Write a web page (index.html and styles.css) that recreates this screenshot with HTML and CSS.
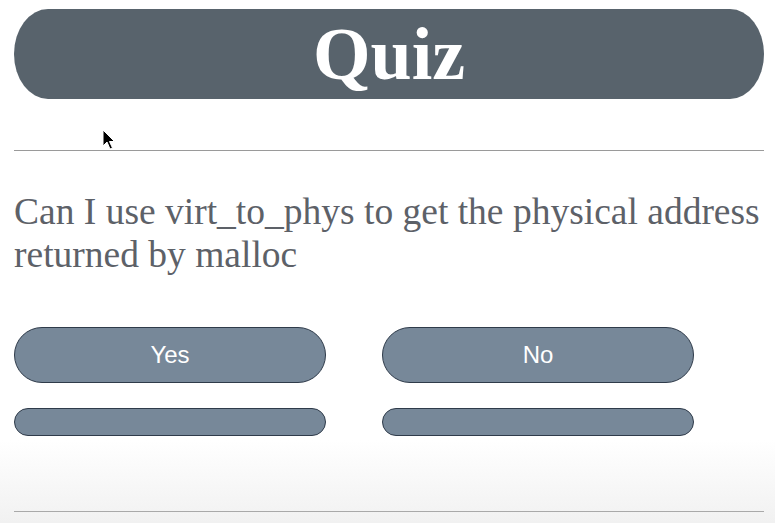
FILE: index.html
```html
<!DOCTYPE html>
<html>
<head>
<meta charset="utf-8">
<link rel="stylesheet" href="styles.css">
</head>
<body>
<div class="page">
  <h1 class="title">Quiz</h1>
  <hr class="rule">
  <p class="question">Can I use virt_to_phys to get the physical address returned by malloc</p>
  <div class="answers">
    <button class="answer">Yes</button>
    <button class="answer">No</button>
    <button class="answer slim"></button>
    <button class="answer slim"></button>
  </div>
  <hr class="rule bottom">
</div>
<svg class="cursor" width="14" height="22" viewBox="0 0 14 22">
  <path d="M1 1 L1 17 L5 13 L8 20 L10.5 19 L7.5 12.5 L12.5 12.5 Z" fill="#000" stroke="#fff" stroke-width="1"/>
</svg>
</body>
</html>
```
FILE: styles.css
```css
html, body {
  margin: 0;
  padding: 0;
}
body {
  width: 775px;
  height: 523px;
  overflow: hidden;
  position: relative;
  background: linear-gradient(to bottom, #ffffff 0, #ffffff 440px, #f1f1f1 523px);
}
.page {
  padding: 9px 11px 0 14px;
  display: flex;
  flex-direction: column;
  width: 750px;
}
.title {
  margin: 0;
  height: 90px;
  background: #58636c;
  border-radius: 34px / 45px;
  color: #ffffff;
  font-family: "Liberation Serif", serif;
  font-weight: bold;
  font-size: 74px;
  line-height: 90px;
  text-align: center;
}
.rule {
  margin: 51px 0 0 0;
  border: 0;
  border-top: 1px solid #9a9a9a;
  height: 0;
}
.question {
  margin: 39px 0 0 0;
  font-family: "Liberation Serif", serif;
  font-size: 37.5px;
  line-height: 43px;
  color: #5d6168;
}
.answers {
  margin-top: 51px;
  display: grid;
  grid-template-columns: 312px 312px;
  column-gap: 56px;
  row-gap: 25px;
}
.answer {
  height: 56px;
  background: #778899;
  border: 1px solid #2f3b4a;
  border-radius: 28px;
  color: #ffffff;
  font-family: "Liberation Sans", sans-serif;
  font-size: 24px;
  padding: 0;
}
.answer.slim {
  height: 28px;
  border-radius: 14px;
}
.rule.bottom {
  margin-top: 75px;
  border-top-color: #a9a9a9;
}
.cursor {
  position: absolute;
  left: 102px;
  top: 129px;
}
```
